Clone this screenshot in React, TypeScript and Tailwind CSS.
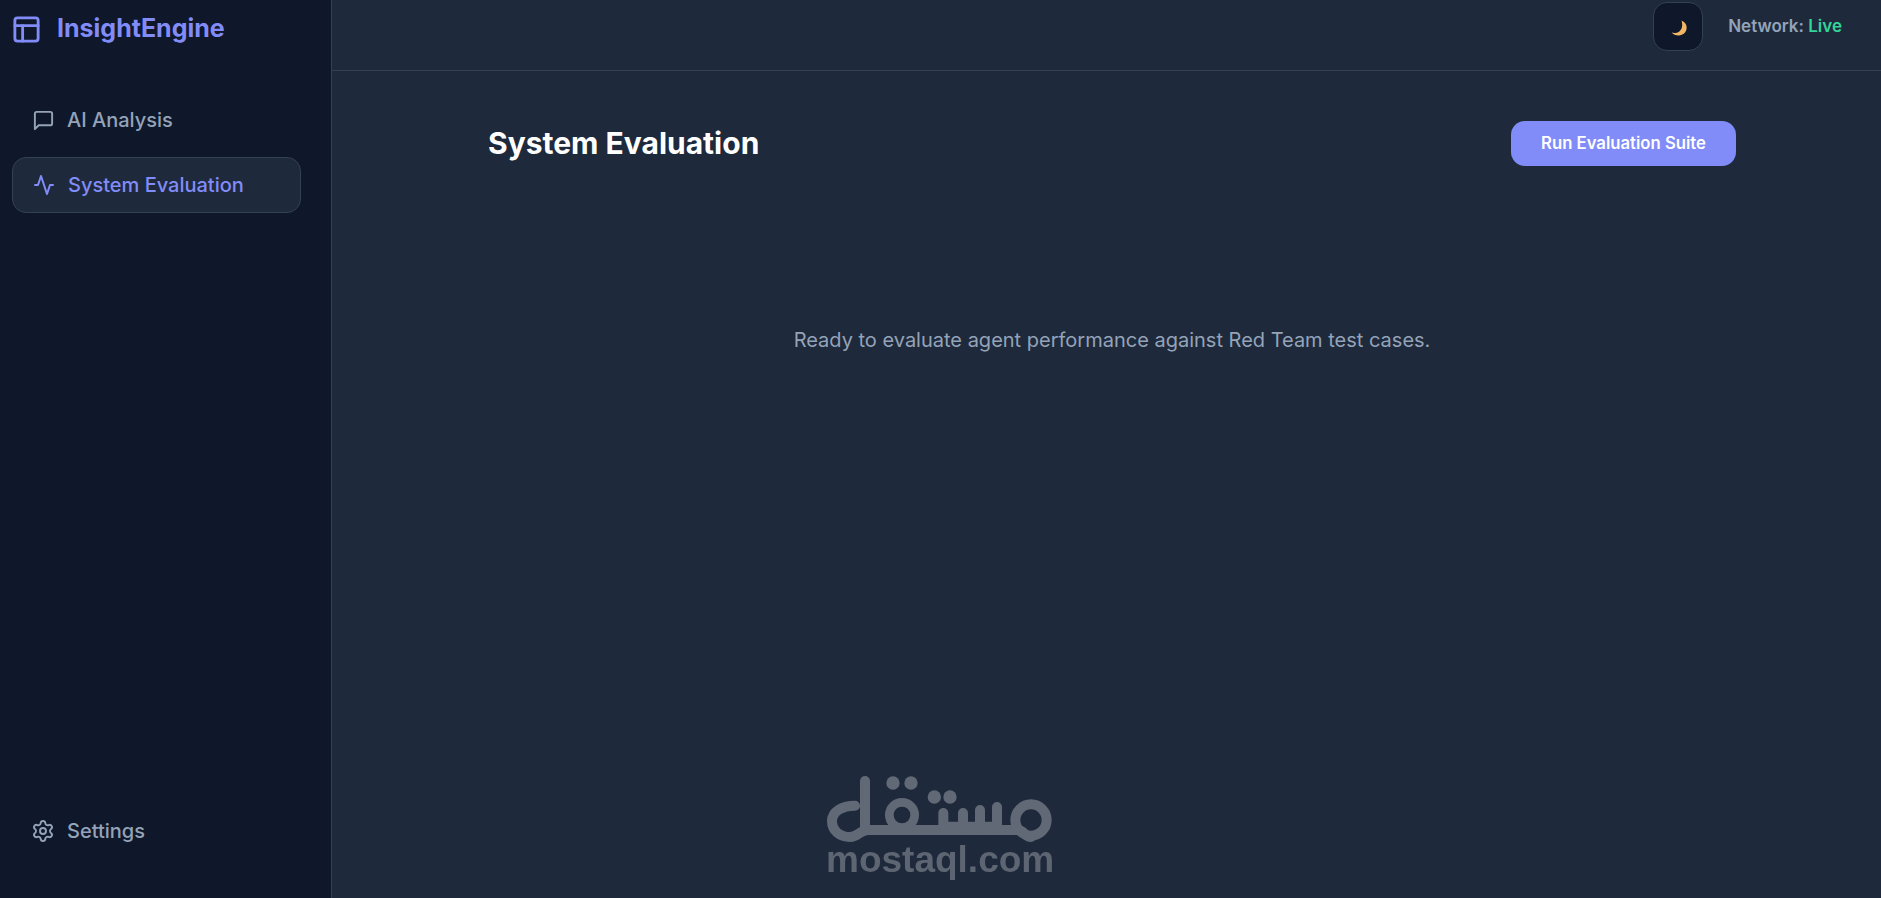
import React from 'react';
import { PanelsTopLeft, Settings } from 'lucide-react';

function ChatIcon() {
  return (
    <svg width="23" height="23" viewBox="0 0 24 24" className="-mr-px" fill="none" stroke="currentColor" strokeWidth="2" strokeLinecap="round" strokeLinejoin="round">
      <path d="M21 15a2 2 0 0 1-2 2H7l-4 4V5a2 2 0 0 1 2-2h14a2 2 0 0 1 2 2z" />
    </svg>
  );
}

function PulseIcon() {
  return (
    <svg width="24" height="24" viewBox="0 0 24 24" className="-ml-px -mr-px" fill="none" stroke="currentColor" strokeWidth="2" strokeLinecap="round" strokeLinejoin="round">
      <polyline points="21 12 18 12 15 21 9 3 6 12 3 12" />
    </svg>
  );
}

function NavItem({ icon, label, active }: { icon: React.ReactNode; label: string; active?: boolean }) {
  return (
    <div
      className={
        active
          ? 'flex items-center gap-[13px] h-[56px] pl-[20px] rounded-[14px] border border-[#334155] bg-[#1e293b] text-[#818cf8]'
          : 'flex items-center gap-[13px] h-[56px] pl-[20px] text-[#94a3b8]'
      }
    >
      {icon}
      <span className="text-[20px] font-medium">{label}</span>
    </div>
  );
}

function Watermark() {
  return (
    <div className="absolute left-[800px] top-[760px] w-[280px] h-[138px] blur-[0.4px]">
      <svg viewBox="0 0 840 414" className="w-[280px] h-[138px]" fill="none" stroke="#616976" strokeWidth="30" strokeLinecap="round" strokeLinejoin="round">
        <path d="M165 137C125 137 96 155 96 183C96 213 120 231 150 231C176 231 178 210 205 210H650C676 210 672 231 693 231" />
        <path d="M195 63V205" />
        <circle cx="306" cy="165" r="38" strokeWidth="26" />
        <path d="M430 159V205M489 159V205M540 150V205M591 141V205" />
        <path d="M430 200H591" strokeLinecap="butt" />
        <circle cx="693" cy="180" r="47" />
        <g fill="#616976" stroke="none">
          <circle cx="279" cy="69" r="20" />
          <circle cx="333" cy="69" r="20" />
          <circle cx="403" cy="111" r="20" />
          <circle cx="450" cy="111" r="20" />
        </g>
      </svg>
      <div className="absolute left-[26px] top-[79px] text-[37px] leading-[42px] font-bold text-[#5d6572] font-['Liberation_Sans',sans-serif]">
        mostaql.com
      </div>
    </div>
  );
}

export default function App() {
  return (
    <div className="relative flex h-[898px] w-[1881px] overflow-hidden bg-[#1e293b] font-['Inter',sans-serif]">
      <aside className="flex flex-col w-[332px] flex-none bg-[#0f172a] border-r border-[#334155]">
        <div className="flex items-center gap-[15px] h-[58px] pl-[11px] text-[#818cf8]">
          <PanelsTopLeft size={31} strokeWidth={2.2} />
          <span className="text-[25px] font-bold">InsightEngine</span>
        </div>
        <nav className="flex flex-col gap-[9px] mt-[34px] w-[289px] ml-[12px]">
          <NavItem icon={<ChatIcon />} label="AI Analysis" />
          <NavItem icon={<PulseIcon />} label="System Evaluation" active />
        </nav>
        <div className="mt-auto mb-[39px] w-[289px] ml-[11px]">
          <NavItem icon={<Settings size={24} strokeWidth={1.9} className="-mr-px" />} label="Settings" />
        </div>
      </aside>
      <main className="flex-1 flex flex-col min-w-0">
        <header className="flex justify-end items-start h-[71px] flex-none border-b border-[#334155] pr-[39px] pt-[2px]">
          <button className="flex items-center justify-center w-[50px] h-[49px] pl-[2px] pt-[3px] rounded-[14px] bg-[#0f172a] border border-[#334155]">
            <svg viewBox="0 0 16 16" className="w-[16px] h-[16px]">
              <path d="M10.5 0.5C14 2 16 5 15.6 8.6C15.2 12.8 11.5 15.6 7.5 15.4C4.7 15.3 2.3 14.2 0.6 12.4C3 13.3 6 13 8.3 11.4C11 9.4 12 5.5 10.5 0.5Z" fill="#f2b665" />
            </svg>
          </button>
          <div className="ml-[25px] mt-[12px] text-[17px] font-semibold text-[#94a3b8]">
            Network: <span className="text-[#34d399]">Live</span>
          </div>
        </header>
        <div className="w-[1248px] ml-[156px]">
          <div className="flex items-center justify-between mt-[50px]">
            <h1 className="text-[30px] font-bold text-white">System Evaluation</h1>
            <button className="w-[225px] h-[45px] rounded-[14px] bg-[#818cf8] text-white text-[16.7px] font-semibold">
              Run Evaluation Suite
            </button>
          </div>
          <p className="mt-[159px] text-center text-[20px] text-[#94a3b8]">
            Ready to evaluate agent performance against Red Team test cases.
          </p>
        </div>
      </main>
      <Watermark />
    </div>
  );
}
